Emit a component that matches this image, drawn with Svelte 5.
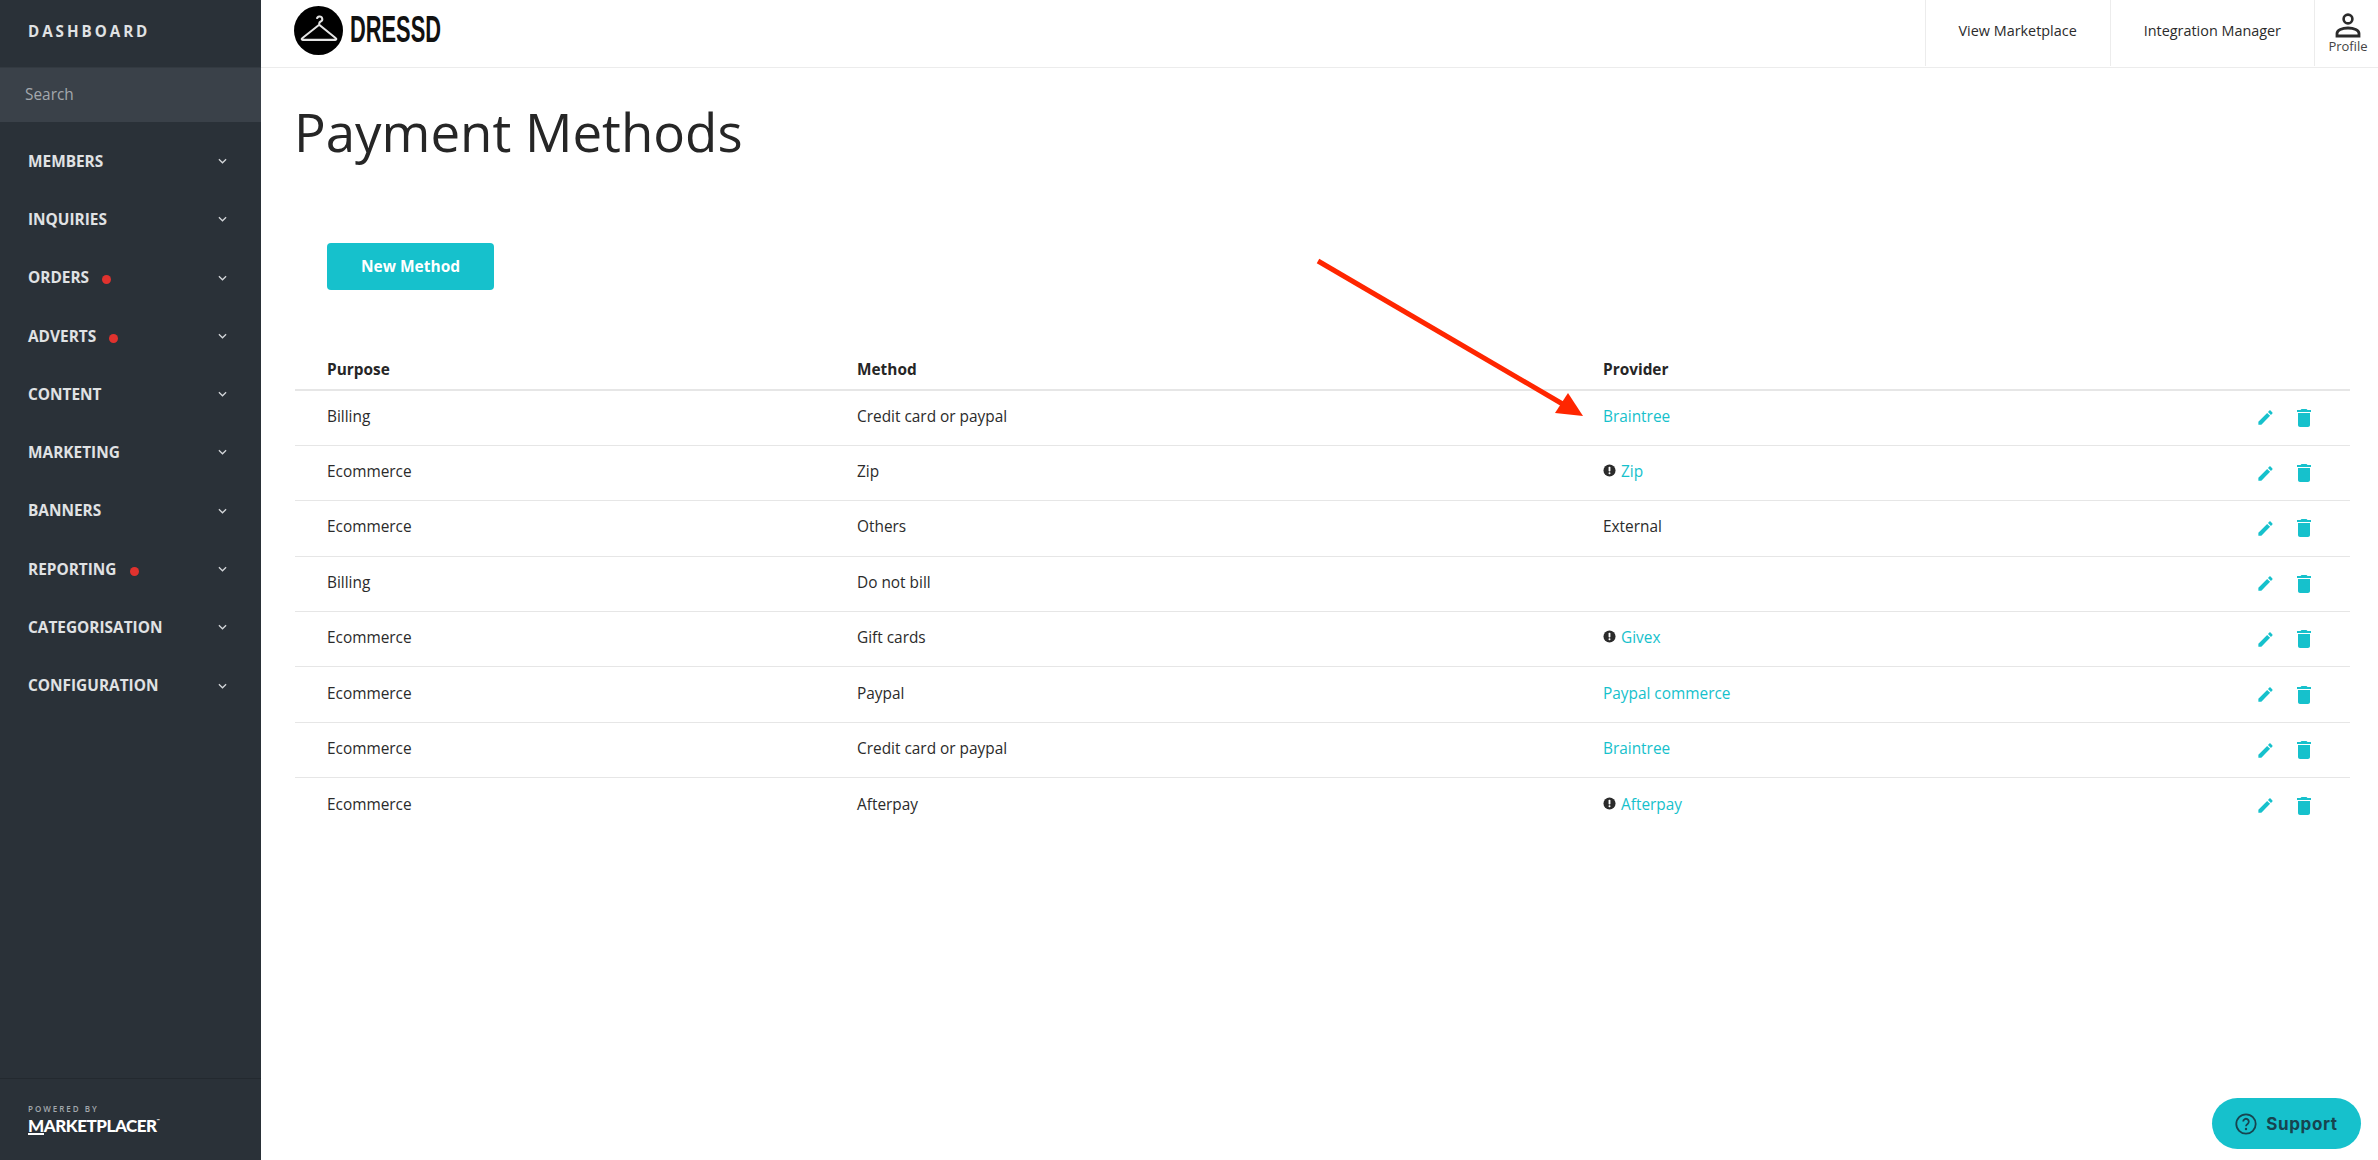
<script lang="ts">
  const navItems = [
    { label: 'MEMBERS' },
    { label: 'INQUIRIES' },
    { label: 'ORDERS', alert: true },
    { label: 'ADVERTS', alert: true },
    { label: 'CONTENT' },
    { label: 'MARKETING' },
    { label: 'BANNERS' },
    { label: 'REPORTING', alert: true },
    { label: 'CATEGORISATION' },
    { label: 'CONFIGURATION' }
  ];

  const rows = [
    { purpose: 'Billing', method: 'Credit card or paypal', provider: 'Braintree', link: true },
    { purpose: 'Ecommerce', method: 'Zip', provider: 'Zip', link: true, warn: true },
    { purpose: 'Ecommerce', method: 'Others', provider: 'External' },
    { purpose: 'Billing', method: 'Do not bill', provider: '' },
    { purpose: 'Ecommerce', method: 'Gift cards', provider: 'Givex', link: true, warn: true },
    { purpose: 'Ecommerce', method: 'Paypal', provider: 'Paypal commerce', link: true },
    { purpose: 'Ecommerce', method: 'Credit card or paypal', provider: 'Braintree', link: true },
    { purpose: 'Ecommerce', method: 'Afterpay', provider: 'Afterpay', link: true, warn: true }
  ];
</script>

<div class="page">
  <aside class="sidebar">
    <div class="brand">DASHBOARD</div>
    <div class="search">Search</div>
    <nav>
      {#each navItems as item}
        <div class="nav-item">
          <span class="nav-label">{item.label}</span>
          {#if item.alert}<span class="dot"></span>{/if}
          <svg class="chevron" viewBox="0 0 10 6" aria-hidden="true">
            <path d="M1 1l4 4 4-4" fill="none" stroke="currentColor" stroke-width="1.4" />
          </svg>
        </div>
      {/each}
    </nav>
    <footer class="powered">
      <div class="powered-by">POWERED BY</div>
      <div class="mp-logo"><span class="mp-m">M</span>ARKETPLACER<sup>™</sup></div>
    </footer>
  </aside>

  <div class="content">
    <header class="topbar">
      <div class="logo">
        <svg class="logo-mark" viewBox="0 0 48 48" aria-hidden="true">
          <circle cx="24" cy="24" r="24" fill="#000" />
          <path
            d="M22.5 12.6a2.6 2.6 0 1 1 3.6 2.6c-.8.4-1.4.9-1.4 2v1.2L41 31.6c.8.6.5 1.6-.5 1.6H8.5c-1 0-1.3-1-.5-1.6l16.7-13.2"
            fill="none"
            stroke="#e4e4e4"
            stroke-width="2"
          />
        </svg>
        <span class="wordmark">DRESSD</span>
      </div>
      <div class="top-links">
        <div class="top-link">View Marketplace</div>
        <div class="top-link">Integration Manager</div>
        <div class="profile">
          <svg viewBox="0 0 26 26" aria-hidden="true">
            <circle cx="13" cy="7" r="4.4" fill="none" stroke="#2b2b2b" stroke-width="2.6" />
            <path d="M2 24v-2.5c0-3.4 5-5.5 11-5.5s11 2.1 11 5.5V24z" fill="none" stroke="#2b2b2b" stroke-width="2.8" />
          </svg>
          <span>Profile</span>
        </div>
      </div>
    </header>

    <main>
      <h1>Payment Methods</h1>
      <button class="new-btn" type="button">New Method</button>
      <table>
        <thead>
          <tr>
            <th class="col-purpose">Purpose</th>
            <th class="col-method">Method</th>
            <th>Provider</th>
            <th></th>
          </tr>
        </thead>
        <tbody>
          {#each rows as row}
            <tr>
              <td>{row.purpose}</td>
              <td>{row.method}</td>
              <td>
                {#if row.warn}
                  <svg class="warn" viewBox="0 0 14 14" aria-hidden="true">
                    <circle cx="7" cy="7" r="6.5" fill="#2b2b2b" />
                    <rect x="6" y="3" width="2" height="5" rx="0.8" fill="#fff" />
                    <rect x="6" y="9" width="2" height="2" rx="0.8" fill="#fff" />
                  </svg>
                {/if}
                {#if row.link}<span class="link">{row.provider}</span>{:else}{row.provider}{/if}
              </td>
              <td>
                <div class="actions">
                  <svg class="edit" viewBox="0 0 24 24" aria-hidden="true">
                    <path d="M3 17.25V21h3.75L17.81 9.94l-3.75-3.75L3 17.25zM20.71 7.04c.39-.39.39-1.02 0-1.41l-2.34-2.34c-.39-.39-1.02-.39-1.41 0l-1.83 1.83 3.75 3.75 1.83-1.83z" />
                  </svg>
                  <svg class="trash" viewBox="0 0 24 24" aria-hidden="true">
                    <path d="M6 19c0 1.1.9 2 2 2h8c1.1 0 2-.9 2-2V7H6v12zM19 4h-3.5l-1-1h-5l-1 1H5v2h14V4z" />
                  </svg>
                </div>
              </td>
            </tr>
          {/each}
        </tbody>
      </table>
    </main>
  </div>

  <!-- annotation drawn over the page -->
  <svg class="arrow" viewBox="0 0 2378 1160" aria-hidden="true">
    <line x1="1318" y1="261" x2="1566" y2="406" stroke="#ff2600" stroke-width="5" />
    <polygon points="1568,393 1583,416 1555,413" fill="#ff2600" />
  </svg>

  <button class="support" type="button">
    <svg viewBox="0 0 22 22" aria-hidden="true">
      <circle cx="11" cy="11" r="9.7" fill="none" stroke="#17444f" stroke-width="1.8" />
      <path d="M8.2 8.6a2.8 2.8 0 1 1 4.4 2.3c-1 .7-1.6 1.1-1.6 2.3" fill="none" stroke="#17444f" stroke-width="1.8" />
      <circle cx="11" cy="16" r="1.2" fill="#17444f" />
    </svg>
    Support
  </button>
</div>

<style>
  :global(body) {
    margin: 0;
    font-family: 'Open Sans', 'Liberation Sans', sans-serif;
    color: #2b2b2b;
    background: #fff;
  }

  .page {
    display: flex;
    height: 1160px;
    overflow: hidden;
    position: relative;
  }

  .sidebar {
    width: 261px;
    flex: none;
    background: #2a3138;
    display: flex;
    flex-direction: column;
    color: #e0e2e4;
  }

  .brand {
    height: 67px;
    padding-left: 28px;
    padding-bottom: 6px;
    display: flex;
    align-items: center;
    font-size: 15.2px;
    font-weight: 700;
    letter-spacing: 2.95px;
    box-sizing: border-box;
  }

  .search {
    height: 55px;
    background: #3a4149;
    border-top: 1px solid #333a41;
    box-sizing: border-box;
    padding-left: 25px;
    padding-bottom: 2px;
    display: flex;
    align-items: center;
    font-size: 15.4px;
    color: #a3a8ad;
  }

  nav {
    padding-top: 10px;
    flex: 1;
  }

  .nav-item {
    height: 58.3px;
    display: flex;
    align-items: center;
    padding-left: 28px;
    position: relative;
    font-size: 15.4px;
    font-weight: 700;
  }

  .dot {
    width: 9px;
    height: 9px;
    border-radius: 50%;
    background: #e0322e;
    margin-left: 13px;
    margin-top: 4px;
  }

  .chevron {
    position: absolute;
    left: 218px;
    top: 26px;
    width: 9px;
    height: 6px;
    color: #d4d7da;
  }

  .powered {
    height: 82px;
    border-top: 1px solid #23292f;
    box-sizing: border-box;
    padding: 24px 0 0 28px;
  }

  .powered-by {
    font-size: 8px;
    font-weight: 600;
    letter-spacing: 2px;
    color: #a3a8ad;
    line-height: 11px;
  }

  .mp-logo {
    font-family: Lato, 'Liberation Sans', sans-serif;
    font-size: 17px;
    font-weight: 900;
    color: #fff;
    line-height: 20px;
    margin-top: 2px;
    letter-spacing: -0.45px;
  }

  .mp-m {
    border-bottom: 2px solid #fff;
    line-height: 15px;
    display: inline-block;
  }

  .mp-logo sup {
    font-size: 4px;
    vertical-align: 10px;
    line-height: 0;
  }

  .content {
    flex: 1;
    min-width: 0;
    display: flex;
    flex-direction: column;
  }

  .topbar {
    height: 68px;
    flex: none;
    box-sizing: border-box;
    border-bottom: 1px solid #ececec;
    display: flex;
    justify-content: space-between;
    padding-left: 33px;
  }

  .logo {
    display: flex;
    align-items: center;
    gap: 7px;
  }

  .logo-mark {
    width: 49px;
    height: 49px;
    margin-top: -7px;
  }

  .wordmark {
    font-family: 'Liberation Sans', sans-serif;
    font-weight: 700;
    font-size: 37px;
    color: #111;
    display: inline-block;
    width: 90px;
    margin-top: -7px;
    transform: scaleX(0.59);
    transform-origin: left center;
  }

  .top-links {
    display: flex;
    height: 66px;
  }

  .top-link {
    padding: 0 33px 5px;
    box-sizing: border-box;
    display: flex;
    align-items: center;
    font-size: 14.4px;
    border-left: 1px solid #ececec;
    white-space: nowrap;
    height: 66px;
  }

  .profile {
    width: 64px;
    box-sizing: border-box;
    border-left: 1px solid #ececec;
    display: flex;
    flex-direction: column;
    align-items: center;
    padding: 12px 0 0 3px;
    font-size: 13px;
    line-height: 18px;
    color: #444;
  }

  .profile svg {
    width: 26px;
    height: 26px;
    display: block;
    margin-bottom: -1px;
  }

  main {
    padding: 0 28px 0 34px;
  }

  h1 {
    margin: 26px 0 0 -1px;
    font-size: 52.8px;
    font-weight: 400;
    line-height: 76px;
    color: #262626;
  }

  .new-btn {
    display: block;
    margin: 73px 0 0 32px;
    width: 167px;
    height: 47px;
    border: 0;
    border-radius: 4px;
    background: #16c1cc;
    color: #fff;
    padding: 0 0 1px;
    font: 700 15.5px 'Open Sans', sans-serif;
  }

  table {
    width: 100%;
    margin-top: 59px;
    border-collapse: collapse;
    table-layout: fixed;
    font-size: 15.4px;
  }

  th {
    text-align: left;
    font-weight: 700;
    height: 39px;
    padding: 1px 0 0 32px;
    border-bottom: 2px solid #e6e6e6;
    color: #262626;
  }

  td {
    height: 55.4px;
    padding: 0 0 3px 32px;
    border-bottom: 1px solid #e6e6e6;
    color: #2b2b2b;
    box-sizing: border-box;
  }

  tbody tr:last-child td {
    border-bottom: 0;
  }

  .col-purpose {
    width: 498px;
  }

  .col-method {
    width: 714px;
  }

  .link {
    color: #16c1cc;
  }

  .warn {
    width: 13px;
    height: 13px;
    margin-right: 1px;
  }

  .actions {
    display: flex;
    justify-content: flex-end;
    align-items: center;
    gap: 17px;
    padding-right: 34px;
    margin-bottom: -3px;
  }

  .edit {
    width: 19px;
    height: 19px;
    fill: #16c1cc;
  }

  .trash {
    width: 24px;
    height: 24px;
    fill: #16c1cc;
  }

  .arrow {
    position: absolute;
    inset: 0;
    width: 2378px;
    height: 1160px;
    pointer-events: none;
  }

  .support {
    position: absolute;
    left: 2212px;
    top: 1098px;
    width: 149px;
    height: 51px;
    border: 0;
    border-radius: 26px;
    background: #16c1cc;
    color: #17444f;
    font: 700 17px Inter, sans-serif;
    letter-spacing: 0.6px;
    display: flex;
    align-items: center;
    justify-content: center;
    gap: 9px;
    padding: 0;
  }

  .support svg {
    width: 22px;
    height: 22px;
  }
</style>
